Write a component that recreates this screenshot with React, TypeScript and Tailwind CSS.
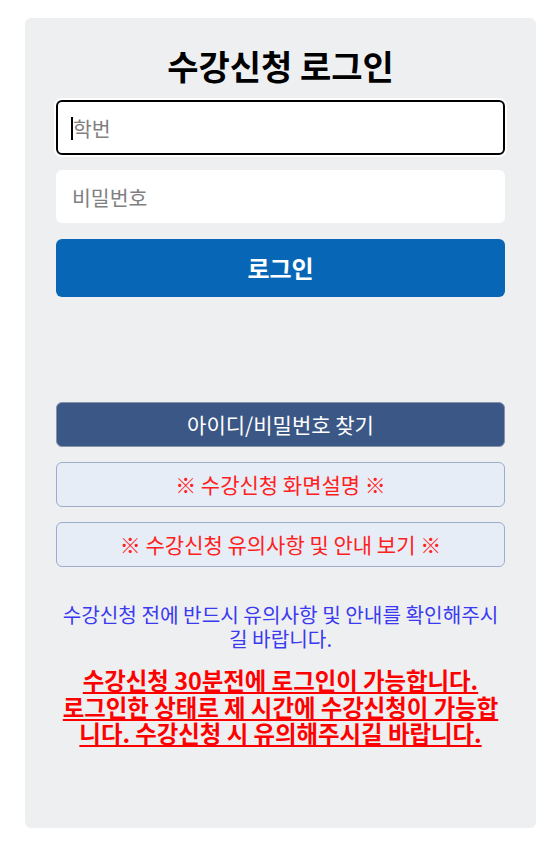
export default function App() {
  return (
    <div className="min-h-[842px] bg-white pt-[18px] font-['Noto_Sans_CJK_KR','Noto_Sans',sans-serif]">
      <div className="ml-[25px] w-[511px] h-[810px] rounded-md bg-[#eeeff1] px-[31px] pt-[26px]">
        <h1 className="text-center text-[34px] font-bold leading-[44px] text-black">수강신청 로그인</h1>
        <div className="mt-[12px] flex flex-col">
          <div className="relative">
            <input
              type="text"
              placeholder="학번"
              className="h-[55px] w-full rounded-md border-2 border-black bg-white px-[15px] text-[20.5px] text-black placeholder:text-[#808080] outline-none ring-2 ring-white"
            />
            <span className="absolute left-[15px] top-[17px] h-[23px] w-[2px] bg-black" />
          </div>
          <input
            type="password"
            placeholder="비밀번호"
            className="mt-[15px] h-[53px] w-full rounded-md bg-white px-[16px] text-[20.5px] text-black placeholder:text-[#808080] outline-none"
          />
          <button className="mt-[16px] h-[58px] w-full rounded-md bg-[#0767b6] text-[24px] font-bold text-white">로그인</button>
        </div>
        <div className="mt-[105px] flex flex-col gap-[15px]">
          <button className="h-[45px] w-full rounded-md border border-[#8793ad] bg-[#3b5786] text-[21px] text-white">
            아이디/비밀번호 찾기
          </button>
          <button className="h-[45px] w-full rounded-md border border-[#9eaccb] bg-[#e7edf7] text-[21px] text-[#ff2020]">
            ※ 수강신청 화면설명 ※
          </button>
          <button className="h-[45px] w-full rounded-md border border-[#9eaccb] bg-[#e7edf7] text-[21px] text-[#ff2020]">
            ※ 수강신청 유의사항 및 안내 보기 ※
          </button>
        </div>
        <p className="mt-[36px] text-center text-[20.2px] leading-[23.5px] text-[#3a3af0]">
          수강신청 전에 반드시 유의사항 및 안내를 확인해주시길 바랍니다.
        </p>
        <p className="mt-[17px] text-center text-[23.4px] font-bold leading-[26.5px] text-[#ff0000] underline">
          수강신청 30분전에 로그인이 가능합니다.
          <br />
          로그인한 상태로 제 시간에 수강신청이 가능합니다. 수강신청 시 유의해주시길 바랍니다.
        </p>
      </div>
    </div>
  );
}
